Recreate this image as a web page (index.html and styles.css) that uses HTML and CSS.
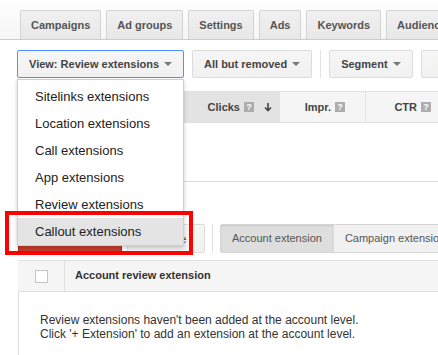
FILE: index.html
```html
<!DOCTYPE html>
<html lang="en">
<head>
    <meta charset="UTF-8">
    <title>Review extensions</title>
    <link rel="stylesheet" href="styles.css">
</head>
<body>
    <div class="tabs">
        <div class="tab">Campaigns</div>
        <div class="tab">Ad groups</div>
        <div class="tab">Settings</div>
        <div class="tab">Ads</div>
        <div class="tab">Keywords</div>
        <div class="tab">Audiences</div>
    </div>

    <div class="page">
        <div class="toolbar">
            <div class="btn btn-active">View: Review extensions <span class="caret"></span></div>
            <div class="btn">All but removed <span class="caret"></span></div>
            <div class="sep"></div>
            <div class="btn">Segment <span class="caret"></span></div>
            <div class="btn btn-filter">Filter <span class="caret"></span></div>
        </div>

        <div class="stats">
            <div class="stats-head">
                <div class="col col-name"></div>
                <div class="col col-sorted">Clicks <span class="help">?</span>
                    <svg class="sort" width="8" height="9" viewBox="0 0 8 9"><path d="M4 0v7M1 4.5l3 3 3-3" fill="none" stroke="#444" stroke-width="1.6"/></svg>
                </div>
                <div class="col">Impr. <span class="help">?</span></div>
                <div class="col">CTR <span class="help">?</span></div>
                <div class="col">Avg. CPC</div>
            </div>
            <div class="stats-body"></div>
        </div>

        <div class="toolbar toolbar-ext">
            <div class="btn btn-red">+ Extension</div>
            <div class="btn btn-plain">Remove</div>
            <div class="sep"></div>
            <div class="toggle">
                <div class="toggle-item on">Account extension</div>
                <div class="toggle-item">Campaign extension</div>
                <div class="toggle-item">Ad group extension</div>
            </div>
        </div>

        <div class="ext-table">
            <div class="ext-head">
                <div class="ext-check"><span class="checkbox"></span></div>
                <div class="ext-title">Account review extension</div>
            </div>
            <div class="ext-body">
                Review extensions haven't been added at the account level.<br>
                Click '+ Extension' to add an extension at the account level.
            </div>
        </div>

        <div class="menu">
            <div class="menu-item">Sitelinks extensions</div>
            <div class="menu-item">Location extensions</div>
            <div class="menu-item">Call extensions</div>
            <div class="menu-item">App extensions</div>
            <div class="menu-item">Review extensions</div>
            <div class="menu-item hover">Callout extensions</div>
        </div>

        <div class="mark"></div>
    </div>
</body>
</html>
```

FILE: styles.css
```css
body {
    margin: 0;
    width: 438px;
    height: 355px;
    overflow: hidden;
    background: #fff;
    font-family: Arial, 'Liberation Sans', sans-serif;
    color: #333;
    white-space: nowrap;
}

.tabs {
    display: flex;
    gap: 5px;
    height: 29px;
    padding: 10px 0 0 20px;
    border-bottom: 1px solid #cdcdcd;
    background: linear-gradient(#fefefe, #f6f6f6);
}

.tab {
    flex: none;
    padding: 0 10px;
    line-height: 28px;
    border: 1px solid #d3d3d3;
    border-bottom: none;
    border-radius: 2px 2px 0 0;
    background: linear-gradient(#f0f0f0, #e8e8e8);
    font-size: 11px;
    font-weight: bold;
    color: #555;
}

.page {
    position: relative;
}

.toolbar {
    display: flex;
    align-items: center;
    gap: 8px;
    padding: 10px 0 0 17px;
}

.btn {
    flex: none;
    display: flex;
    align-items: center;
    gap: 5px;
    box-sizing: border-box;
    height: 28px;
    padding: 0 11px;
    border: 1px solid #dcdcdc;
    border-radius: 2px;
    background: linear-gradient(#f6f6f6, #f1f1f1);
    font-size: 11px;
    font-weight: bold;
    color: #444;
}

.btn-active {
    border-color: #4d90fe;
}

.btn-filter {
    padding-left: 16px;
}

.caret {
    width: 0;
    height: 0;
    border-left: 4px solid transparent;
    border-right: 4px solid transparent;
    border-top: 4px solid #777;
}

.sep {
    flex: none;
    width: 1px;
    height: 28px;
    background: #e2e2e2;
}

.stats {
    margin: 13px 0 0 18px;
    border-bottom: 1px solid #dcdcdc;
}

.stats-head {
    display: flex;
    height: 30px;
    border-top: 1px solid #e0e0e0;
    border-bottom: 1px solid #e0e0e0;
    background: #f5f5f5;
}

.col {
    flex: none;
    box-sizing: border-box;
    width: 86px;
    padding-right: 20px;
    display: flex;
    align-items: center;
    justify-content: flex-end;
    gap: 4px;
    border-right: 1px solid #e4e4e4;
    font-size: 11px;
    font-weight: bold;
    color: #444;
}

.col-name {
    width: 145px;
}

.col-sorted {
    width: 117px;
    padding-right: 7px;
    background: #e3e3e3;
}

.help {
    display: inline-block;
    width: 10px;
    height: 10px;
    line-height: 10px;
    background: #adadad;
    color: #fff;
    font-size: 9px;
    text-align: center;
}

.sort {
    margin-left: 6px;
}

.stats-body {
    height: 58px;
}

.toolbar-ext {
    padding-top: 42px;
    padding-left: 18px;
    gap: 0;
}

.toolbar-ext .btn {
    height: 29px;
}

.toolbar-ext .sep {
    height: 29px;
    margin: 0 7px;
}

.btn-red {
    width: 104px;
    justify-content: center;
    border-color: #b0281a;
    background: linear-gradient(#d6493a, #c23b2b);
    color: #fff;
}

.btn-plain {
    width: 78px;
    margin-left: 5px;
    justify-content: center;
    font-weight: normal;
    color: #444;
}

.toggle {
    display: flex;
    height: 29px;
    border: 1px solid #d6d6d6;
    border-radius: 2px;
    box-sizing: border-box;
}

.toggle-item {
    padding: 0 11px;
    line-height: 27px;
    background: #f1f1f1;
    border-left: 1px solid #dcdcdc;
    font-size: 11px;
    color: #555;
}

.toggle-item:first-child {
    border-left: none;
}

.toggle-item.on {
    background: #dedede;
    box-shadow: inset 0 1px 2px rgba(0, 0, 0, 0.1);
}

.ext-table {
    margin: 7px 0 0 18px;
}

.ext-head {
    display: flex;
    height: 30px;
    border-top: 1px solid #e0e0e0;
    border-bottom: 1px solid #dedede;
    background: #f5f5f5;
}

.ext-check {
    width: 46px;
    display: flex;
    align-items: center;
    justify-content: center;
    border-right: 1px solid #e0e0e0;
}

.checkbox {
    width: 11px;
    height: 11px;
    border: 1px solid #c4c4c4;
    background: #fff;
}

.ext-title {
    padding-left: 10px;
    line-height: 29px;
    font-size: 11px;
    font-weight: bold;
    color: #333;
}

.ext-body {
    height: 80px;
    padding: 21px 0 0 21px;
    border-left: 1px solid #dedede;
    font-size: 12px;
    line-height: 14px;
    color: #333;
}

.menu {
    position: absolute;
    top: 39px;
    left: 17px;
    width: 167px;
    box-sizing: border-box;
    padding-top: 3px;
    border: 1px solid #d0d0d0;
    background: #fff;
    box-shadow: 0 2px 4px rgba(0, 0, 0, 0.2);
    z-index: 2;
}

.menu-item {
    height: 27px;
    line-height: 27px;
    padding-left: 17px;
    font-size: 13px;
    color: #222;
}

.menu-item.hover {
    background: #e4e4e4;
}

.mark {
    position: absolute;
    top: 171px;
    left: 5px;
    width: 188px;
    height: 44px;
    box-sizing: border-box;
    border: 4px solid #f00;
    z-index: 3;
}
```
